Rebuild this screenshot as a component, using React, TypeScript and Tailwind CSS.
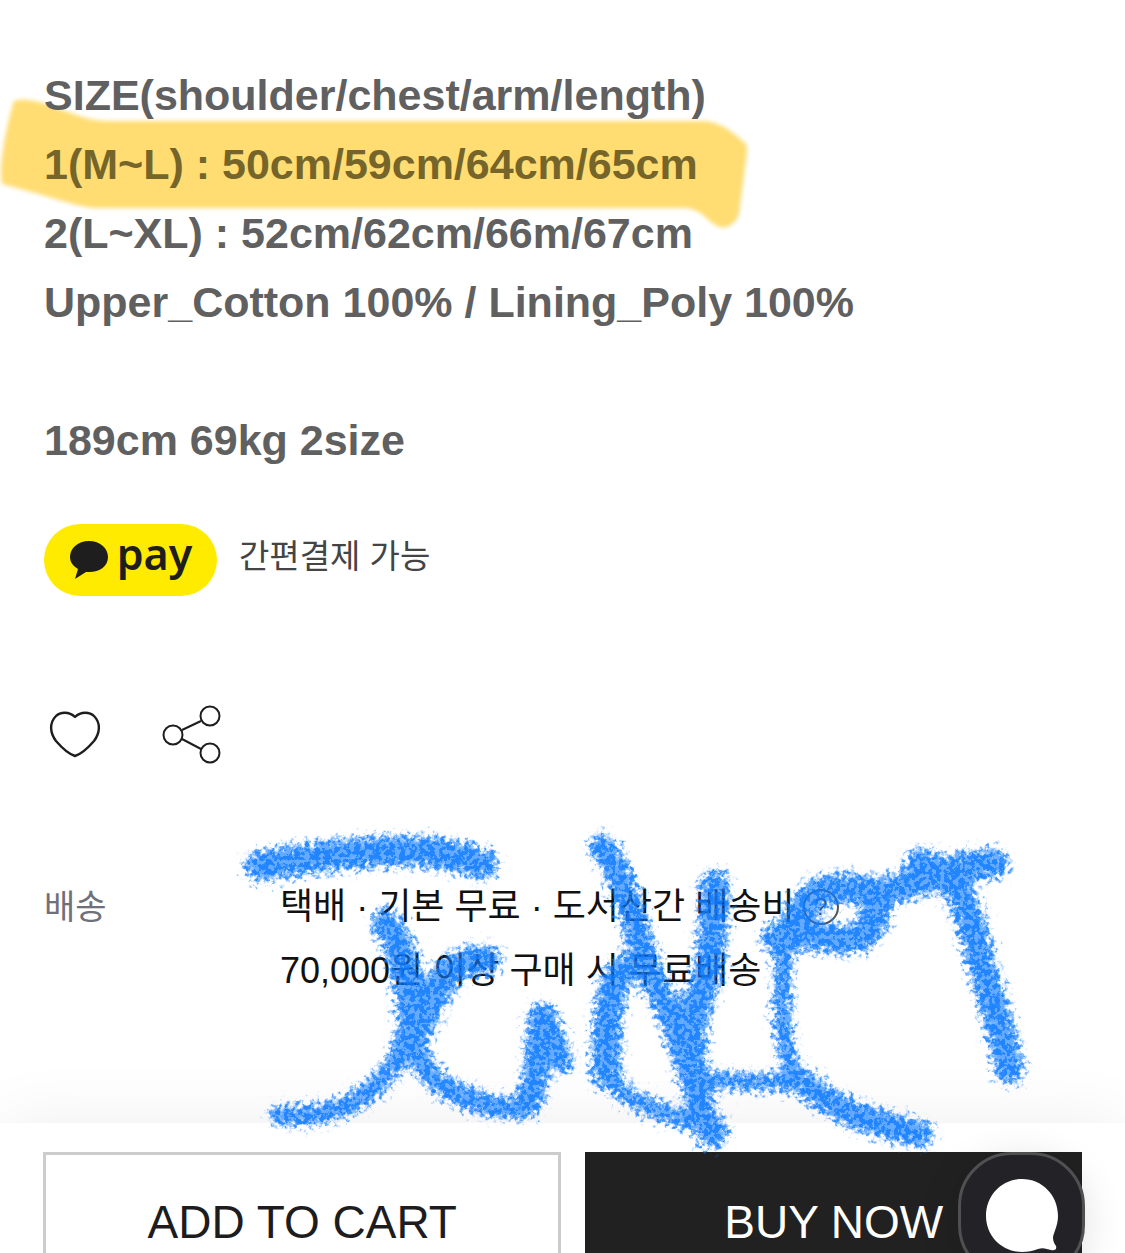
import React from 'react';

const sizeLines = [
  { id: 1, text: "SIZE(shoulder/chest/arm/length)" },
  { id: 2, text: "1(M~L) : 50cm/59cm/64cm/65cm", marked: true },
  { id: 3, text: "2(L~XL) : 52cm/62cm/66m/67cm" },
  { id: 4, text: "Upper_Cotton 100% / Lining_Poly 100%" },
  { id: 5, text: "" },
  { id: 6, text: "189cm 69kg 2size" },
];

// Crayon strokes, drawn on a 1125 wide canvas
const strokes = [
  { d: "M260 866 C310 857 370 849 425 852 C455 855 470 859 482 864", width: 35 },
  { d: "M386 924 C398 938 412 975 413 1040", width: 34 },
  { d: "M486 960 C455 958 440 976 418 1030", width: 34 },
  { d: "M410 1010 C405 1062 384 1084 352 1103 C330 1115 300 1118 280 1115", width: 24 },
  { d: "M414 1000 C408 1064 434 1085 460 1095 C486 1108 512 1110 530 1106", width: 26 },
  { d: "M528 1104 C538 1080 538 1050 541 1016", width: 31 },
  { d: "M544 1012 C554 1028 560 1048 564 1064", width: 23 },
  { d: "M602 847 C632 884 634 942 656 985 C676 1022 688 1065 700 1104 L712 1136", width: 31 },
  { d: "M632 966 C608 972 606 1020 606 1074", width: 34 },
  { d: "M610 1080 C628 1102 668 1116 720 1130", width: 22 },
  { d: "M715 884 C713 920 714 952 704 984 C692 1015 690 1044 692 1068", width: 34 },
  { d: "M690 1077 C720 1082 760 1082 810 1082", width: 22 },
  { d: "M776 938 C795 932 820 936 846 940 C866 938 876 926 876 906 C876 892 866 888 846 888 C812 888 798 906 790 938", width: 34 },
  { d: "M784 946 C783 980 778 1030 790 1062 C796 1078 806 1084 814 1090", width: 22 },
  { d: "M806 1084 C834 1110 872 1124 920 1134", width: 31 },
  { d: "M880 892 C924 884 950 864 994 864", width: 34 },
  { d: "M920 862 C948 872 964 894 974 934 C984 980 1002 1024 1009 1070", width: 33 },
];

function Highlight() {
  return (
    <svg className="absolute top-0 left-0 pointer-events-none" width="760" height="240" viewBox="0 0 760 240" aria-hidden="true">
      <defs>
        <filter id="soft" x="-5%" y="-10%" width="110%" height="120%">
          <feGaussianBlur stdDeviation="2" />
        </filter>
      </defs>
      <path
        d="M14 101 C22 98 36 101 46 104 C66 110 84 121 108 121 H704 C722 122 736 135 746 144 Q748 148 746 160 L739 214 C735 226 724 230 717 226 C706 220 702 209 684 208 H100 C78 208 64 200 2 184 C-2 170 6 126 14 101 Z"
        fill="#ffdd72"
        filter="url(#soft)"
      />
    </svg>
  );
}

function Scribble() {
  return (
    <svg className="absolute top-0 left-0 z-20 pointer-events-none" width="1125" height="1253" viewBox="0 0 1125 1253" aria-hidden="true">
      <defs>
        <filter id="crayon" filterUnits="userSpaceOnUse" x="220" y="810" width="830" height="360" colorInterpolationFilters="sRGB">
          <feTurbulence type="fractalNoise" baseFrequency="0.2" numOctaves="3" seed="7" result="noise" />
          {/* fade the edges first so the grain eats into them more than the core */}
          <feGaussianBlur in="SourceGraphic" stdDeviation="4" result="faded" />
          <feDisplacementMap in="faded" in2="noise" scale="22" xChannelSelector="R" yChannelSelector="G" result="rough" />
          <feColorMatrix in="noise" type="matrix" values="0 0 0 0 0  0 0 0 0 0  0 0 0 0 0  0 0 4 0 -1.8" result="grain" />
          <feComposite in="rough" in2="grain" operator="arithmetic" k1="0.4" k2="1.3" k3="0.9" k4="-0.6" result="mixed" />
          <feComposite in="mixed" in2="rough" operator="in" result="clipped" />
          <feGaussianBlur in="clipped" stdDeviation="0.7" result="ink" />
          <feFlood floodColor="#0f7bff" />
          <feComposite in2="ink" operator="in" />
        </filter>
      </defs>
      <g filter="url(#crayon)" opacity="0.92" fill="none" stroke="#0f7bff" strokeLinejoin="round">
        {strokes.map((stroke) => (
          <path key={stroke.d} d={stroke.d} strokeWidth={stroke.width} strokeLinecap="round" />
        ))}
      </g>
    </svg>
  );
}

export default function App() {
  return (
    <div className="relative h-screen overflow-hidden flex flex-col bg-white font-['Liberation_Sans','Noto_Sans_CJK_KR',sans-serif] text-[#1d1d1f]">
      <main className="flex-1 px-11 pt-[61px]">
        <Highlight />

        {/* Size info */}
        <div className="relative text-[43px] leading-[69px] font-bold text-[#606060]">
          {sizeLines.map((line) => (
            <p key={line.id} className={line.marked ? "min-h-[69px] text-[#75652a]" : "min-h-[69px]"}>
              {line.text}
            </p>
          ))}
        </div>

        {/* Kakao pay */}
        <div className="mt-[49px] flex items-center gap-[22px]">
          <div className="w-[173px] h-[72px] rounded-full bg-[#ffeb00] flex items-center justify-center gap-2 text-[#1e1e1e]">
            <svg width="40" height="38" viewBox="0 0 40 38" aria-hidden="true">
              <path d="M20 0 C31 0 39 7 39 16 C39 25 31 31 20 31 L17 31 L6 38 L9 28 C4 25 1 21 1 16 C1 7 9 0 20 0 Z" fill="currentColor" />
            </svg>
            <span className="font-['Noto_Sans',sans-serif] font-semibold text-[43px] leading-[56px] pb-3">pay</span>
          </div>
          <span className="text-[33px] leading-[48px] pb-1.5 text-[#444444]">간편결제 가능</span>
        </div>

        {/* Like and share */}
        <div className="mt-[108px] flex items-center gap-[58px]">
          <button type="button" aria-label="Like" className="w-[60px] h-[62px]">
            <svg width="60" height="62" viewBox="0 0 60 62" fill="none" stroke="#1d1d1f" strokeWidth="2.4" strokeLinejoin="round">
              <path d="M31 13 C25 7 16 8 12 12 C5 19 6 29 12 37 C18 44 25 50 31 52 C37 50 44 44 50 37 C56 29 57 19 50 12 C46 8 37 7 31 13 Z" />
            </svg>
          </button>
          <button type="button" aria-label="Share" className="w-[60px] h-[62px]">
            <svg width="60" height="62" viewBox="0 0 60 62" fill="none" stroke="#1d1d1f" strokeWidth="2">
              <circle cx="11" cy="31" r="9.5" />
              <circle cx="48" cy="12" r="9.5" />
              <circle cx="48" cy="49" r="9.5" />
              <path d="M20 26 L39 17 M20 35 L39 45" />
            </svg>
          </button>
        </div>

        {/* Delivery */}
        <dl className="mt-[109px] flex leading-[64px]">
          <dt className="w-[236px] text-[34px] text-[#6f7079]">배송</dt>
          <dd className="text-[36px] text-[#111111]">
            <div className="flex items-center gap-2">
              <span>택배 · 기본 무료 · 도서산간 배송비</span>
              <button type="button" aria-label="배송비 안내" className="w-9 h-9 rounded-full border-2 border-[#555555] text-[24px] leading-8 text-[#444444]">
                ?
              </button>
            </div>
            <p>70,000원 이상 구매 시 무료배송</p>
          </dd>
        </dl>
      </main>

      {/* Bottom bar, runs below the fold */}
      <footer className="relative z-10 shrink-0 h-[130px] px-[43px] pt-[29px] bg-white shadow-[0_0_70px_rgba(0,0,0,0.07)]">
        <div className="grid grid-cols-[519fr_497fr] gap-6">
          <button type="button" className="h-[140px] border-[3px] border-[#cccccc] bg-white text-[46px]">
            ADD TO CART
          </button>
          <button type="button" className="h-[140px] bg-[#212121] text-white text-[46px]">
            BUY NOW
          </button>
        </div>
        <button
          type="button"
          aria-label="Chat"
          className="absolute top-[29px] right-10 w-[127px] h-[127px] rounded-[54px] border-[3px] border-[#505052] bg-[#232227] flex items-center justify-center shadow-[0_8px_40px_rgba(0,0,0,0.12)]"
        >
          <svg width="74" height="74" viewBox="0 0 74 74" fill="#ffffff">
            <path d="M37 0 C57 0 73 16 73 37 C73 46 69 53 68 58 C68 62 69 64 71 67 C72 70 70 72 66 71 C62 70 58 68 53 70 C48 72 43 73 37 73 C17 73 1 57 1 37 C1 16 17 0 37 0 Z" />
          </svg>
        </button>
      </footer>

      <Scribble />
    </div>
  );
}
